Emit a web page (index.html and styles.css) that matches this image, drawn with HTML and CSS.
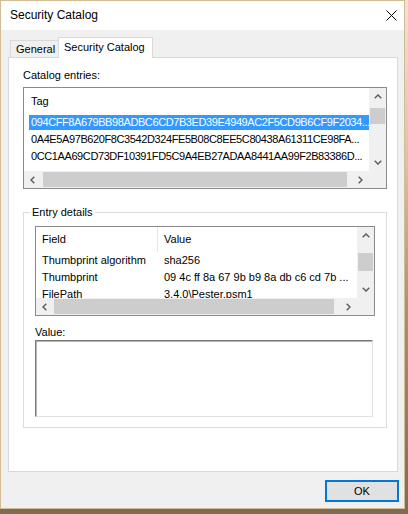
FILE: index.html
```html
<!DOCTYPE html>
<html lang="en">
<head>
<meta charset="utf-8">
<title>Security Catalog</title>
<link rel="stylesheet" href="styles.css">
</head>
<body>
<div class="window">
  <div class="titlebar">
    <span class="title">Security Catalog</span>
    <svg class="close" width="11" height="11" viewBox="0 0 11 11"><path d="M0.5 0.5 L10.5 10.5 M10.5 0.5 L0.5 10.5" stroke="#000" stroke-width="1" fill="none"/></svg>
  </div>
  <div class="client">
    <div class="tabs">
      <div class="tab general">General</div>
      <div class="tab active">Security Catalog</div>
    </div>
    <div class="panel">
      <div class="label">Catalog entries:</div>
      <div class="listview catalog">
        <div class="lv-content">
          <div class="lv-header"><span class="hcell">Tag</span></div>
          <div class="lv-row hex selected">094CFF8A679BB98ADBC6CD7B3ED39E4949AC2F5CD9B6CF9F2034...</div>
          <div class="lv-row hex">0A4E5A97B620F8C3542D324FE5B08C8EE5C80438A61311CE98FA...</div>
          <div class="lv-row hex">0CC1AA69CD73DF10391FD5C9A4EB27ADAA8441AA99F2B83386D...</div>
        </div>
        <div class="vscroll">
          <div class="arrow"><svg width="8" height="5" viewBox="0 0 8 5"><path d="M0.7 4.3 L4 1 L7.3 4.3" fill="none" stroke="#606060" stroke-width="1.5"/></svg></div>
          <div class="track"><div class="thumb cat-vthumb"></div></div>
          <div class="arrow"><svg width="8" height="5" viewBox="0 0 8 5"><path d="M0.7 0.7 L4 4 L7.3 0.7" fill="none" stroke="#606060" stroke-width="1.5"/></svg></div>
        </div>
        <div class="hscroll">
          <div class="arrow"><svg width="5" height="8" viewBox="0 0 5 8"><path d="M4.3 0.7 L1 4 L4.3 7.3" fill="none" stroke="#606060" stroke-width="1.5"/></svg></div>
          <div class="track"><div class="thumb cat-hthumb"></div></div>
          <div class="arrow"><svg width="5" height="8" viewBox="0 0 5 8"><path d="M0.7 0.7 L4 4 L0.7 7.3" fill="none" stroke="#606060" stroke-width="1.5"/></svg></div>
        </div>
        <div class="corner"></div>
      </div>

      <fieldset class="group">
        <legend>Entry details</legend>
        <div class="listview details">
          <div class="lv-content">
            <div class="lv-header">
              <span class="hcell c1">Field</span>
              <span class="hcell c2">Value</span>
            </div>
            <div class="lv-row2"><span class="c1">Thumbprint algorithm</span><span class="c2">sha256</span></div>
            <div class="lv-row2"><span class="c1">Thumbprint</span><span class="c2">09 4c ff 8a 67 9b b9 8a db c6 cd 7b ...</span></div>
            <div class="lv-row2"><span class="c1">FilePath</span><span class="c2">3.4.0\Pester.psm1</span></div>
          </div>
          <div class="vscroll">
            <div class="arrow"><svg width="8" height="5" viewBox="0 0 8 5"><path d="M0.7 4.3 L4 1 L7.3 4.3" fill="none" stroke="#606060" stroke-width="1.5"/></svg></div>
            <div class="track"><div class="thumb det-vthumb"></div></div>
            <div class="arrow"><svg width="8" height="5" viewBox="0 0 8 5"><path d="M0.7 0.7 L4 4 L7.3 0.7" fill="none" stroke="#606060" stroke-width="1.5"/></svg></div>
          </div>
          <div class="hscroll">
            <div class="arrow"><svg width="5" height="8" viewBox="0 0 5 8"><path d="M4.3 0.7 L1 4 L4.3 7.3" fill="none" stroke="#606060" stroke-width="1.5"/></svg></div>
            <div class="track"><div class="thumb det-hthumb"></div></div>
            <div class="arrow"><svg width="5" height="8" viewBox="0 0 5 8"><path d="M0.7 0.7 L4 4 L0.7 7.3" fill="none" stroke="#606060" stroke-width="1.5"/></svg></div>
          </div>
          <div class="corner"></div>
        </div>
        <div class="value-label">Value:</div>
        <div class="value-box"></div>
      </fieldset>
    </div>
    <div class="footer">
      <button class="ok" type="button">OK</button>
    </div>
  </div>
</div>
</body>
</html>
```

FILE: styles.css
```css
* { box-sizing: border-box; }

html {
  background: linear-gradient(to bottom, #efe5d2 0%, #d9c7a3 30%, #a8936c 60%, #7d6c52 100%);
  min-height: 100%;
}

body {
  margin: 0;
  font-family: "Liberation Sans", Arial, sans-serif;
  font-size: 11px;
  color: #000;
}

.window {
  width: 405px;
  height: 509px;
  border: 1px solid #d3bb94;
  background: #f0f0f0;
  display: flex;
  flex-direction: column;
}

.titlebar {
  flex: none;
  height: 29px;
  background: #fff;
  display: flex;
  align-items: center;
  justify-content: space-between;
  padding: 0 7px 0 9px;
}

.title {
  font-size: 12px;
  line-height: 15px;
}

.close { display: block; }

.client {
  flex: 1;
  display: flex;
  flex-direction: column;
  padding: 7px 6px 0 7px;
}

.tabs {
  display: flex;
  align-items: flex-end;
  height: 20px;
  padding-left: 2px;
  position: relative;
  z-index: 1;
}

.tab {
  line-height: 13px;
  white-space: nowrap;
  padding-left: 5px;
  border: 1px solid #d9d9d9;
  border-bottom: none;
}

.tab.general {
  width: 48px;
  height: 17px;
  padding-top: 2px;
  border-right: none;
  background: #f0f0f0;
}

.tab.active {
  width: 95px;
  height: 21px;
  padding-top: 3px;
  margin-bottom: -1px;
  background: #fff;
}

.panel {
  height: 415px;
  border: 1px solid #d9d9d9;
  background: #fff;
  padding: 11px 0 0 14px;
}

.label {
  line-height: 13px;
}

.listview {
  display: grid;
  grid-template-columns: 1fr 17px;
  grid-template-rows: 1fr 17px;
  border: 1px solid #8a8a8a;
  background: #fff;
}

.listview.catalog {
  width: 364px;
  height: 102px;
  margin-top: 5px;
}

.lv-content {
  overflow: hidden;
  min-width: 0;
}

.lv-header {
  display: flex;
  white-space: nowrap;
}

.catalog .lv-header {
  height: 26px;
  line-height: 26px;
  padding-left: 7px;
}

.lv-row {
  height: 17px;
  line-height: 15px;
  margin-left: 5px;
  padding-left: 2px;
  white-space: nowrap;
  overflow: hidden;
  border-top: 1px solid transparent;
  border-bottom: 1px solid transparent;
  background-clip: padding-box;
}

.hex {
  letter-spacing: -0.4px;
}

.lv-row.selected {
  background-color: #3399ff;
  color: #fff;
}

.vscroll {
  display: flex;
  flex-direction: column;
  background: #f0f0f0;
}

.hscroll {
  display: flex;
  background: #f0f0f0;
}

.arrow {
  flex: none;
  width: 17px;
  height: 17px;
  display: flex;
  align-items: center;
  justify-content: center;
}

.arrow svg { display: block; }

.track {
  flex: 1;
  display: flex;
}

.vscroll .track { flex-direction: column; align-items: center; }
.hscroll .track { align-items: center; }

.thumb {
  background: #cdcdcd;
  flex: none;
}

.cat-vthumb { width: 15px; height: 16px; margin-top: 3px; }
.cat-hthumb { height: 15px; width: 304px; margin-left: 2px; }
.det-vthumb { width: 15px; height: 18px; margin-top: 9px; }
.det-hthumb { height: 15px; width: 280px; margin-left: 1px; }

.corner { background: #f0f0f0; }

.group {
  width: 364px;
  margin: 17px 0 0 0;
  padding: 7px 0 10px 6px;
  border: 1px solid #dcdcdc;
  min-width: 0;
}

.group legend {
  padding: 0 2px;
  line-height: 13px;
}

.listview.details {
  width: 340px;
  height: 90px;
  margin-left: 5px;
}

.details .lv-header {
  height: 25px;
  line-height: 24px;
}

.details .hcell.c1 {
  border-right: 1px solid #e5e5e5;
}

.c1 {
  flex: none;
  display: inline-block;
  width: 122px;
  padding-left: 6px;
}

.c2 {
  display: inline-block;
  padding-left: 6px;
}

.lv-row2 {
  display: flex;
  height: 17px;
  line-height: 17px;
  white-space: nowrap;
}

.value-label {
  margin: 10px 0 0 5px;
  line-height: 13px;
}

.value-box {
  width: 338px;
  height: 77px;
  margin: 1px 0 0 5px;
  border: 1px solid;
  border-color: #7a7a7a #e0e0e0 #e0e0e0 #7a7a7a;
  box-shadow: inset 1px 1px 0 #b4b4b4;
  background: #fff;
}

.footer {
  display: flex;
  justify-content: flex-end;
  margin-top: 8px;
}

.ok {
  width: 74px;
  height: 22px;
  margin-right: -1px;
  border: 2px solid #0078d7;
  background: #e1e1e1;
  font-family: "Liberation Sans", Arial, sans-serif;
  font-size: 11px;
  color: #000;
  padding: 0;
}
```
